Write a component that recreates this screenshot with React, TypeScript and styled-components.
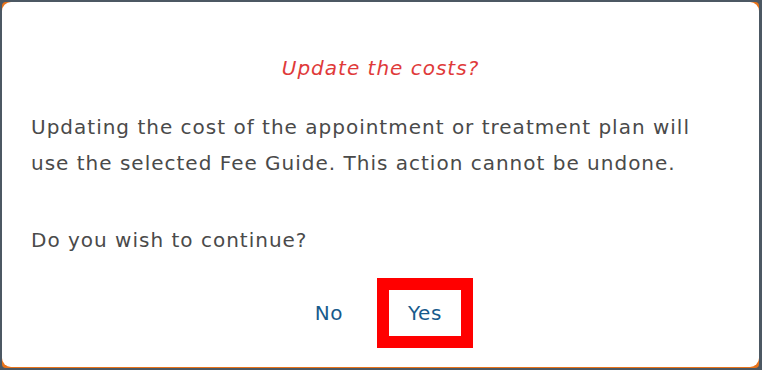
import styled, { createGlobalStyle } from "styled-components";

const Global = createGlobalStyle`
  html, body {
    margin: 0;
    padding: 0;
    background: #4c5863;
  }
  body {
    font-family: "DejaVu Sans", Verdana, sans-serif;
  }
`;

const Frame = styled.div`
  width: 762px;
  height: 370px;
  box-sizing: border-box;
  padding: 2px 3px 2px 2px;
`;

const Edge = styled.div`
  height: 100%;
  background: #e8731a;
  border-radius: 4px;
  padding-bottom: 1px;
  box-sizing: border-box;
`;

const Dialog = styled.div`
  height: 100%;
  background: #fff;
  border-radius: 9px;
  box-sizing: border-box;
  padding: 50px 29px 0 29px;
  display: flex;
  flex-direction: column;
`;

const Title = styled.h2`
  margin: 0;
  font-size: 20px;
  letter-spacing: 1px;
  font-weight: normal;
  font-style: italic;
  color: #e03a3a;
  text-align: center;
  line-height: 32px;
`;

const Text = styled.p<{ $gap?: number }>`
  margin: ${(p) => p.$gap ?? 0}px 0 0 0;
  max-width: 690px;
  font-size: 20px;
  letter-spacing: 1px;
  line-height: 36px;
  color: #4a4a4a;
`;

const Actions = styled.div`
  display: flex;
  justify-content: center;
  align-items: center;
  padding-right: 7px;
  margin-top: 20px;
`;

const Button = styled.button<{ $focused?: boolean }>`
  font-family: "DejaVu Sans", Verdana, sans-serif;
  font-size: 20px;
  letter-spacing: 0.6px;
  color: #175a8c;
  background: #fff;
  border: 12px solid ${(p) => (p.$focused ? "#ff0000" : "transparent")};
  width: 96px;
  height: 70px;
  box-sizing: border-box;
  padding: 0;
  cursor: pointer;
`;

export default function App() {
  return (
    <>
      <Global />
      <Frame>
        <Edge>
          <Dialog>
            <Title>Update the costs?</Title>
            <Text $gap={25}>
              Updating the cost of the appointment or treatment plan will use the selected Fee
              Guide. This action cannot be undone.
            </Text>
            <Text $gap={41}>Do you wish to continue?</Text>
            <Actions>
              <Button>No</Button>
              <Button $focused>Yes</Button>
            </Actions>
          </Dialog>
        </Edge>
      </Frame>
    </>
  );
}
